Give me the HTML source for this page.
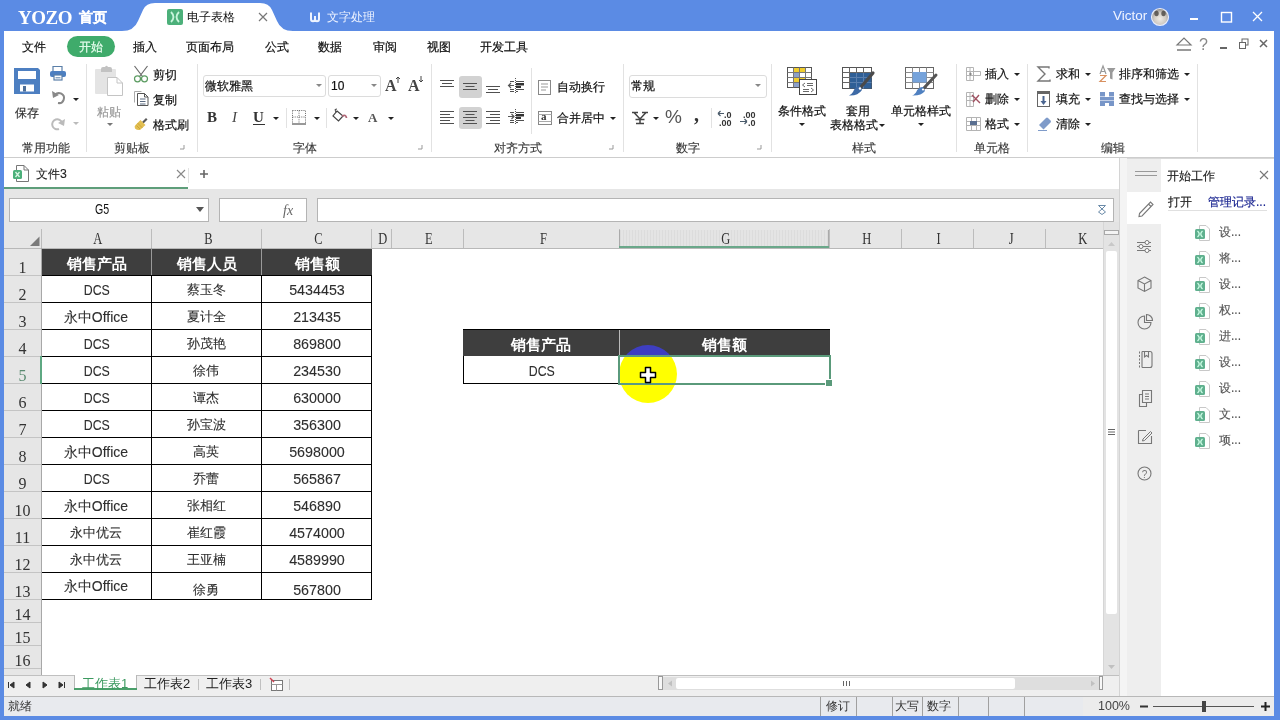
<!DOCTYPE html>
<html><head><meta charset="utf-8">
<style>
*{margin:0;padding:0;box-sizing:border-box}
html,body{width:1280px;height:720px;overflow:hidden}
body{background:#5b8be4;font-family:"Liberation Sans",sans-serif;color:#222;position:relative}
.a{position:absolute;white-space:nowrap}
.t12{font-size:12px;line-height:14px;color:#111;-webkit-text-stroke-width:0.2px}
.gl{color:#3a3a3a;font-size:12px;line-height:14px;-webkit-text-stroke-width:0.15px}
.sep{position:absolute;width:1px;background:#e2e2e2}
.dd{position:absolute;width:0;height:0;border-left:3px solid transparent;border-right:3px solid transparent;border-top:3px solid #222}
.sf{font-family:"Liberation Serif",serif}
</style></head><body>

<!-- ============ TITLE BAR ============ -->
<div class="a sf" style="left:18px;top:7px;font-size:19px;line-height:22px;font-weight:bold;color:#fff;letter-spacing:-0.5px">YOZO</div>
<div class="a" style="left:79px;top:10px;font-size:13.5px;line-height:16px;font-weight:bold;color:#fff;-webkit-text-stroke-width:0.3px">首页</div>
<svg class="a" style="left:0;top:0" width="400" height="32">
<path d="M122,31 Q134,31 138,21 L143,10 Q146,3 155,3 L260,3 Q269,3 272,10 L277,21 Q281,31 293,31 Z" fill="#fff"/>
<rect x="167" y="9" width="16" height="16" rx="2" fill="#4cb07a"/>
<path d="M171,12 Q176,17 171,22 M179,12 Q174,17 179,22" stroke="#c8f5dc" stroke-width="1.8" fill="none"/>
<path d="M259,13 L267,21 M267,13 L259,21" stroke="#777" stroke-width="1.2"/>
<path d="M311,12.5 V19 Q311,21.3 313,21.3 Q315,21.3 315,19 V16 M315,19 Q315,21.3 317,21.3 Q319,21.3 319,19 V12.5" stroke="#eef4ff" stroke-width="2" fill="none"/>
</svg>
<div class="a" style="left:187px;top:10px;font-size:12px;line-height:14px;color:#111">电子表格</div>
<div class="a" style="left:327px;top:10px;font-size:12px;line-height:14px;color:#eef3ff">文字处理</div>
<div class="a" style="left:1113px;top:8px;font-size:13.5px;line-height:16px;color:#f0f4ff">Victor</div>
<svg class="a" style="left:1140px;top:0" width="140" height="32">
<defs><radialGradient id="av" cx="50%" cy="60%" r="60%"><stop offset="0" stop-color="#f0ece6"/><stop offset="0.6" stop-color="#cfc9c2"/><stop offset="1" stop-color="#8a8680"/></radialGradient></defs><circle cx="20" cy="17" r="8.5" fill="url(#av)" stroke="#e8eeff" stroke-width="1.2"/>
<ellipse cx="16.5" cy="13.5" rx="2.2" ry="2.8" fill="#4a4642" opacity="0.8"/><ellipse cx="23.5" cy="13.5" rx="2.2" ry="2.8" fill="#4a4642" opacity="0.8"/>
<rect x="50" y="18" width="8" height="2" fill="#fff"/>
<rect x="81.5" y="12.5" width="10" height="9.5" fill="none" stroke="#fff" stroke-width="1.4"/>
<path d="M113,12 L122,21 M122,12 L113,21" stroke="#fff" stroke-width="1.3"/>
</svg>

<!-- ============ RIBBON ============ -->
<div class="a" style="left:4px;top:31px;width:1270px;height:127px;background:#fff;border-bottom:1px solid #cdcdcd"></div>
<!-- menu -->
<div class="a t12" style="left:22px;top:40px">文件</div>
<div class="a" style="left:67px;top:36px;width:48px;height:21px;border-radius:11px;background:#3fab6b"></div>
<div class="a t12" style="left:79px;top:40px;color:#e9fff0">开始</div>
<div class="a t12" style="left:133px;top:40px">插入</div>
<div class="a t12" style="left:186px;top:40px">页面布局</div>
<div class="a t12" style="left:265px;top:40px">公式</div>
<div class="a t12" style="left:318px;top:40px">数据</div>
<div class="a t12" style="left:373px;top:40px">审阅</div>
<div class="a t12" style="left:427px;top:40px">视图</div>
<div class="a t12" style="left:480px;top:40px">开发工具</div>
<svg class="a" style="left:1170px;top:34px" width="104" height="22">
<path d="M7,11 L14,4 L21,11 Z" fill="none" stroke="#777" stroke-width="1.2"/><path d="M7,16 H21" stroke="#777" stroke-width="1.5"/>
</svg>
<div class="a" style="left:1199px;top:36px;font-size:16px;line-height:18px;color:#888">?</div>
<svg class="a" style="left:1170px;top:34px" width="104" height="22">
<rect x="50" y="13" width="7" height="2" fill="#666"/>
<rect x="72" y="5" width="6" height="6" fill="none" stroke="#666"/><rect x="69.5" y="8.5" width="6" height="6" fill="#fff" stroke="#666"/>
<path d="M90,6 L97,13 M97,6 L90,13" stroke="#666" stroke-width="1.5"/>
</svg>

<!-- group separators -->
<div class="sep" style="left:86px;top:64px;height:88px"></div>
<div class="sep" style="left:197px;top:64px;height:88px"></div>
<div class="sep" style="left:431px;top:64px;height:88px"></div>
<div class="sep" style="left:531px;top:68px;height:66px"></div>
<div class="sep" style="left:623px;top:64px;height:88px"></div>
<div class="sep" style="left:771px;top:64px;height:88px"></div>
<div class="sep" style="left:956px;top:64px;height:88px"></div>
<div class="sep" style="left:1027px;top:64px;height:88px"></div>
<div class="sep" style="left:1197px;top:64px;height:88px"></div>

<!-- group labels -->
<div class="a gl" style="left:22px;top:141px">常用功能</div>
<div class="a gl" style="left:114px;top:141px">剪贴板</div>
<div class="a gl" style="left:293px;top:141px">字体</div>
<div class="a gl" style="left:494px;top:141px">对齐方式</div>
<div class="a gl" style="left:676px;top:141px">数字</div>
<div class="a gl" style="left:852px;top:141px">样式</div>
<div class="a gl" style="left:974px;top:141px">单元格</div>
<div class="a gl" style="left:1101px;top:141px">编辑</div>
<svg class="a" style="left:0;top:140px" width="1280" height="14">
<path d="M180,9 H184 V5 M418,9 H422 V5 M609,9 H613 V5 M757,9 H761 V5" stroke="#999" fill="none"/>
</svg>

<!-- common group -->
<svg class="a" style="left:10px;top:62px" width="76" height="72">
<path d="M4,6 H28 L30,8 V32 H4 Z" fill="#4d7fc1"/>
<rect x="8" y="9" width="18" height="8" fill="#fff"/>
<rect x="10" y="22.5" width="14" height="7" fill="#fff"/><rect x="13" y="24" width="3" height="5.5" fill="#4d6f99"/>
<path d="M43,4.5 H52 V10 H43 Z" fill="#fff" stroke="#5a7fa8" stroke-width="1.2"/>
<rect x="40" y="9" width="16" height="6" rx="2" fill="#4d7fc1"/>
<rect x="44" y="13" width="8" height="5" fill="#fff" stroke="#5a7fa8" stroke-width="1.2"/><path d="M45.5,15.8 H50.5" stroke="#5a7fa8"/>
<path d="M45,33 A5,5 0 1 1 48,41" fill="none" stroke="#888" stroke-width="2"/><path d="M42,29 L43,36 L49,33 Z" fill="#888"/>
<path d="M52,61 A5,5 0 1 0 49,67" fill="none" stroke="#bbb" stroke-width="2"/><path d="M55,57 L54,64 L48,61 Z" fill="#bbb"/>
</svg>
<div class="dd" style="left:73px;top:98px"></div>
<div class="dd" style="left:73px;top:122px;border-top-color:#bbb"></div>
<div class="a t12" style="left:15px;top:106px;color:#333">保存</div>

<!-- clipboard -->
<svg class="a" style="left:90px;top:62px" width="110" height="75">
<rect x="5" y="7" width="21" height="25" rx="1" fill="#e4e4e4"/>
<path d="M11,10 V7 Q11,5 13,5 H15 Q16.5,2.5 18,5 H20 Q22,5 22,7 V10 Z" fill="#c2c2c2"/>
<path d="M17.5,15.5 H27 L32.5,21 V33.5 H17.5 Z" fill="#fff" stroke="#c4c4c4"/><path d="M27,15.5 V21 H32.5" fill="none" stroke="#c4c4c4"/>
<path d="M44.5,4 L52.5,14.5 M57.5,4 L49.5,14.5" stroke="#6a6a6a" stroke-width="1.2"/>
<circle cx="47.5" cy="16.8" r="3" fill="#fff" stroke="#5c9c62" stroke-width="1.2"/><circle cx="54.5" cy="16.8" r="3" fill="#fff" stroke="#5c9c62" stroke-width="1.2"/>
<path d="M44.5,40.5 V29.5 H51.5" fill="none" stroke="#aaa"/>
<path d="M47.5,31.5 H54.5 L58,35 V43.5 H47.5 Z" fill="#fff" stroke="#555"/><path d="M54.5,31.5 V35 H58" fill="none" stroke="#555"/>
<path d="M50,37 H55.5 M50,39.5 H55.5 M50,42 H55.5" stroke="#5a6a80"/>
<path d="M52,60 L56,56 L57.5,57.5 L53.5,61.5 Z" fill="#5a5a5a"/>
<path d="M50.5,58 L55.5,63 L50,68 Q47,68.5 45,66.5 Q44,64 45.5,63 Z" fill="#e2bf52"/>
<path d="M47.5,61 L52.5,66 M46.5,63.5 L50,67" stroke="#c8a030" stroke-width="0.8"/>
</svg>
<div class="a t12" style="left:97px;top:105px;color:#999">粘贴</div>
<div class="dd" style="left:107px;top:123px;border-top-color:#777"></div>
<div class="a t12" style="left:153px;top:68px">剪切</div>
<div class="a t12" style="left:153px;top:93px">复制</div>
<div class="a t12" style="left:153px;top:118px">格式刷</div>

<!-- font group -->
<div class="a" style="left:203px;top:75px;width:123px;height:22px;border:1px solid #dcdcdc;border-radius:3px"></div>
<div class="a t12" style="left:205px;top:79px">微软雅黑</div>
<div class="dd" style="left:316px;top:84px;border-top-color:#888"></div>
<div class="a" style="left:328px;top:75px;width:53px;height:22px;border:1px solid #dcdcdc;border-radius:3px"></div>
<div class="a t12" style="left:331px;top:79px">10</div>
<div class="dd" style="left:371px;top:84px;border-top-color:#888"></div>
<div class="a sf" style="left:385px;top:77px;font-size:16px;line-height:18px;font-weight:bold;color:#444">A</div>
<div class="a sf" style="left:408px;top:77px;font-size:16px;line-height:18px;font-weight:bold;color:#444">A</div>
<svg class="a" style="left:395px;top:76px" width="40" height="14">
<path d="M3,7 V1 M1,3 L3,1 L5,3" stroke="#444" fill="none"/>
<path d="M26,0 V6 M24,4 L26,6 L28,4" stroke="#444" fill="none"/>
</svg>
<div class="a sf" style="left:207px;top:108px;font-size:15px;line-height:18px;font-weight:bold;color:#333">B</div>
<div class="a sf" style="left:232px;top:108px;font-size:15px;line-height:18px;font-style:italic;color:#444">I</div>
<div class="a sf" style="left:253px;top:108px;font-size:15px;line-height:18px;font-weight:bold;color:#333">U</div>
<div class="a" style="left:253px;top:124px;width:12px;height:1px;background:#333"></div>
<div class="dd" style="left:273px;top:117px"></div>
<div class="sep" style="left:286px;top:108px;height:20px"></div>
<svg class="a" style="left:290px;top:108px" width="20" height="20">
<path d="M2.5,2.5 H15.5 V15.5 M2.5,2.5 V15.5 M9,2.5 V15.5 M2.5,9 H15.5" stroke="#666" stroke-dasharray="1,1.2" fill="none"/>
<path d="M2,16 H16" stroke="#333"/>
</svg>
<div class="dd" style="left:314px;top:117px"></div>
<div class="sep" style="left:326px;top:108px;height:20px"></div>
<svg class="a" style="left:330px;top:108px" width="20" height="20">
<path d="M7,3 L13,8 L8.5,13 L3,8 Z" fill="#fff" stroke="#444" stroke-width="1.2"/><path d="M6,4.5 L5,1.5 L7,1" stroke="#444" fill="none"/>
<path d="M12,8 Q16,6 16.5,10" stroke="#b06878" stroke-width="1.8" fill="none"/>
</svg>
<div class="dd" style="left:353px;top:117px"></div>
<div class="a sf" style="left:368px;top:110px;font-size:13px;line-height:15px;font-weight:bold;color:#555">A</div>
<div class="dd" style="left:388px;top:117px"></div>

<!-- alignment group -->
<div class="a" style="left:459px;top:76px;width:23px;height:22px;border-radius:3px;background:#d2d2d2"></div>
<div class="a" style="left:459px;top:107px;width:23px;height:22px;border-radius:3px;background:#d2d2d2"></div>
<svg class="a" style="left:436px;top:74px" width="95" height="58">
<g stroke="#505050" stroke-width="1">
<path d="M4,6.5 H18 M6,9.5 H16 M4,12.5 H18"/>
<path d="M27,9.5 H41 M29.5,12.5 H38.5 M27,15.5 H41"/>
<path d="M50,12.5 H64 M52,15.5 H62 M50,18.5 H64"/>
<path d="M4,37.5 H18 M4,40.5 H14 M4,43.5 H18 M4,46.5 H14 M4,49.5 H18"/>
<path d="M27,37.5 H41 M29.5,40.5 H38.5 M27,43.5 H41 M29.5,46.5 H38.5 M27,49.5 H41"/>
<path d="M50,37.5 H64 M54,40.5 H64 M50,43.5 H64 M54,46.5 H64 M50,49.5 H64"/>
<path transform="translate(0,-2)" d="M74,9.5 H78 M80,9.5 H88 M80,17.5 H88 M74,17.5 H78 M74,19.5 H78 M80,19.5 H82"/>
<path transform="translate(0,-2)" d="M74,40.5 H78 M80,40.5 H88 M80,48.5 H88 M74,48.5 H78 M74,50.5 H78 M80,50.5 H82"/>
</g>
<g transform="translate(0,-2)"><path d="M80,11 H88 V13.5 H80 Z M80,14 H85 V16 H80 Z M80,42 H88 V44.5 H80 Z M80,45 H85 V47 H80 Z" fill="#333"/>
<path d="M79.5,6 V22 M79.5,37 V53" stroke="#555" stroke-dasharray="1,1"/>
<path d="M72.5,13.5 H78 M75,11 L72.5,13.5 L75,16" stroke="#555" fill="none" stroke-width="1.2"/>
<path d="M72,44.5 H78 M75.5,42 L78,44.5 L75.5,47" stroke="#555" fill="none" stroke-width="1.2"/></g>
</svg>
<svg class="a" style="left:535px;top:76px" width="20" height="52">
<rect x="3.5" y="4.5" width="12" height="14" fill="#fff" stroke="#888"/>
<path d="M6,8 H13 M6,11 H13 M6,14 H11" stroke="#999"/>
<rect x="3.5" y="35.5" width="13" height="13" fill="#fff" stroke="#888"/>
<path d="M3.5,38.5 H16.5 M3.5,45.5 H16.5" stroke="#aaa"/>
</svg>
<div class="a sf" style="left:541px;top:110px;font-size:11px;line-height:12px;color:#333;font-weight:bold">a</div>
<div class="a t12" style="left:557px;top:80px">自动换行</div>
<div class="a t12" style="left:557px;top:111px">合并居中</div>
<div class="dd" style="left:610px;top:117px"></div>

<!-- number group -->
<div class="a" style="left:629px;top:75px;width:138px;height:23px;border:1px solid #dcdcdc;border-radius:3px"></div>
<div class="a t12" style="left:631px;top:79px">常规</div>
<div class="dd" style="left:755px;top:84px;border-top-color:#888"></div>
<svg class="a" style="left:630px;top:108px" width="20" height="20"><path d="M2,4.5 H8 M12,4.5 H18 M4,4.5 L10,11 L16,4.5 M10,11 V15.5 M6,15.5 H14 M5.5,11.5 H14.5" stroke="#444" stroke-width="1.5" fill="none"/></svg>
<div class="dd" style="left:653px;top:117px"></div>
<div class="a" style="left:665px;top:106px;font-size:19px;line-height:22px;color:#555">%</div>
<div class="a sf" style="left:694px;top:104px;font-size:20px;line-height:20px;font-weight:bold;color:#333">,</div>
<div class="sep" style="left:711px;top:108px;height:20px"></div>
<svg class="a" style="left:714px;top:108px" width="46" height="20">
<path d="M4,5.5 H10 M4,5.5 L6.5,3 M4,5.5 L6.5,8" stroke="#4a5a6a" fill="none" stroke-width="1.2"/>
<path d="M26,13.5 H33 M33,13.5 L30.5,11 M33,13.5 L30.5,16" stroke="#4a5a6a" fill="none" stroke-width="1.2"/>
</svg>
<div class="a" style="left:724px;top:110px;font-size:9px;line-height:10px;color:#333;font-weight:bold">.0</div>
<div class="a" style="left:719px;top:118px;font-size:9px;line-height:10px;color:#333;font-weight:bold">.00</div>
<div class="a" style="left:743px;top:110px;font-size:9px;line-height:10px;color:#333;font-weight:bold">.00</div>
<div class="a" style="left:748px;top:118px;font-size:9px;line-height:10px;color:#333;font-weight:bold">.0</div>

<!-- styles group -->
<svg class="a" style="left:780px;top:62px" width="170" height="40">
<g>
<rect x="7.5" y="5.5" width="24" height="20" fill="#fff" stroke="#555"/>
<rect x="14" y="6" width="12" height="5" fill="#f0cd2e"/><rect x="14" y="11" width="5" height="4" fill="#8ca0c8"/><rect x="14" y="15" width="12" height="5" fill="#f0cd2e"/><rect x="14" y="20" width="6" height="5" fill="#8ca0c8"/>
<path d="M7.5,10.5 H31.5 M7.5,15.5 H31.5 M7.5,20.5 H31.5 M13.5,5.5 V25.5 M19.5,5.5 V25.5 M25.5,5.5 V25.5" stroke="#777" fill="none"/>
<rect x="19.5" y="17.5" width="17" height="15" fill="#fff" stroke="#444"/>
<path d="M25,21 L22.5,23 L25,25 M27,21.5 H33 M27,23.5 H33 M23,27.5 H29 M23,29.5 H29 M31,26 L33.5,28 L31,30" stroke="#444" fill="none" stroke-width="0.8"/>
</g>
<g transform="translate(62,0)">
<rect x="0.5" y="5.5" width="29" height="21" fill="#fff" stroke="#555"/>
<rect x="7.5" y="10.5" width="22" height="16" fill="#2f5f96"/>
<path d="M0.5,10.5 H29.5 M0.5,15.5 H29.5 M0.5,20.5 H29.5 M7.5,5.5 V26.5 M14.5,5.5 V26.5 M21.5,5.5 V26.5" stroke="#666" fill="none"/>
<path d="M8,15.5 H29.5 M8,20.5 H29.5 M14.5,11 V26.5 M21.5,11 V26.5" stroke="#5a7fae" fill="none"/>
<path d="M31,11 L19,25" stroke="#4a4a4a" stroke-width="3.2" stroke-linecap="round"/>
<path d="M18,24 Q13,24 11,30 Q9,33 7,33.5 Q16,34 20,28 Z" fill="#3d6aa6"/>
<circle cx="18" cy="26.5" r="1.2" fill="#fff"/>
</g>
<g transform="translate(125,0)">
<rect x="0.5" y="5.5" width="28" height="21" fill="#fff" stroke="#666"/>
<path d="M0.5,10.5 H28.5 M0.5,15.5 H28.5 M0.5,20.5 H28.5 M7.5,5.5 V26.5 M14.5,5.5 V26.5 M21.5,5.5 V26.5" stroke="#8a8a8a" fill="none"/>
<rect x="7.5" y="10" width="14" height="10.5" fill="#76a3db"/>
<path d="M31,13 L19,26" stroke="#555" stroke-width="3" stroke-linecap="round"/>
<path d="M18,25 Q13,25 11,30.5 Q9,33 7,33.5 Q16,34 20,29 Z" fill="#4f80c0"/>
<circle cx="18" cy="27.5" r="1.1" fill="#fff"/>
</g>
</svg>
<div class="a t12" style="left:778px;top:104px">条件格式</div>
<div class="dd" style="left:799px;top:123px"></div>
<div class="a t12" style="left:846px;top:104px">套用</div>
<div class="a t12" style="left:830px;top:118px">表格格式</div>
<div class="dd" style="left:879px;top:124px"></div>
<div class="a t12" style="left:891px;top:104px">单元格样式</div>
<div class="dd" style="left:918px;top:123px"></div>

<!-- cells group -->
<svg class="a" style="left:962px;top:62px" width="240" height="72">
<g stroke="#b4b4b4" fill="none">
<path d="M4.5,5.5 H11.5 V18.5 H4.5 Z M4.5,9.5 H11.5 M4.5,13.5 H11.5 M8,5.5 V18.5 M11.5,9.5 H18.5 V13.5 H11.5"/>
<path d="M4.5,30.5 H11.5 V44.5 H4.5 Z M4.5,34.5 H11.5 M4.5,38.5 H11.5 M8,30.5 V44.5"/>
<path d="M4.5,55.5 H18.5 V68.5 H4.5 Z M4.5,59.5 H18.5 M4.5,63.5 H18.5 M9.5,55.5 V68.5 M14.5,55.5 V68.5"/>
</g>
<path d="M7,12 H10 M8.5,10.5 V13.5" stroke="#888"/>
<path d="M10,33 L18,41 M17,33 L11,40" stroke="#a05060" stroke-width="1.4"/>
<rect x="8" y="59" width="7" height="4" fill="#5a6f90"/>
<path d="M87,6.5 V5 H76 L83,12 L76,19 H88 V17.5" stroke="#777" stroke-width="1.4" fill="none"/>
<rect x="75.5" y="29.5" width="12" height="15" fill="#fff" stroke="#666"/>
<rect x="75.5" y="29.5" width="12" height="2.5" fill="#666"/>
<path d="M81.5,34 V40" stroke="#4a6590" stroke-width="2"/><path d="M78.5,39 L81.5,43 L84.5,39 Z" fill="#4a6590"/>
<path d="M77,63 L84,56 Q85,55 86,56 L88.5,58.5 Q89.5,59.5 88.5,60.5 L81.5,67.5 Z" fill="#7f9bc9"/><path d="M76,68.5 H85" stroke="#7f9bc9"/>
<path d="M138,12 L141,4 L144,12 M139,9.5 H143" stroke="#999" fill="none" stroke-width="1.2"/>
<path d="M138,13.5 H144 L138,19.5 H144" stroke="#d89060" fill="none" stroke-width="1.2"/>
<path d="M145,6 H153.5 L150.5,10.5 V17.5 L148,16.5 V10.5 Z" fill="#9a9a9a"/>
<g fill="#7896c8"><rect x="138" y="30" width="5" height="14"/><rect x="147" y="30" width="5" height="14"/><rect x="143" y="35" width="4" height="6"/></g>
<path d="M138,34.5 H152 M138,38.5 H152" stroke="#fff" stroke-width="0.8" opacity="0.7"/>
</svg>
<div class="a t12" style="left:985px;top:67px">插入</div>
<div class="dd" style="left:1014px;top:73px"></div>
<div class="a t12" style="left:985px;top:92px">删除</div>
<div class="dd" style="left:1014px;top:98px"></div>
<div class="a t12" style="left:985px;top:117px">格式</div>
<div class="dd" style="left:1014px;top:123px"></div>
<div class="a t12" style="left:1056px;top:67px">求和</div>
<div class="dd" style="left:1085px;top:73px"></div>
<div class="a t12" style="left:1056px;top:92px">填充</div>
<div class="dd" style="left:1085px;top:98px"></div>
<div class="a t12" style="left:1056px;top:117px">清除</div>
<div class="dd" style="left:1085px;top:123px"></div>
<div class="a t12" style="left:1119px;top:67px">排序和筛选</div>
<div class="dd" style="left:1184px;top:73px"></div>
<div class="a t12" style="left:1119px;top:92px">查找与选择</div>
<div class="dd" style="left:1184px;top:98px"></div>

<div class="a" style="left:4px;top:158px;width:1115px;height:31px;background:#fff"></div>
<svg class="a" style="left:8px;top:162px" width="24" height="24"><path d="M8.5,3.5 H16 L20.5,8 V19.5 H8.5 Z" fill="#fff" stroke="#777"/><path d="M16,3.5 V8 H20.5" fill="none" stroke="#777"/><rect x="5" y="8" width="9" height="9" rx="1.5" fill="#4cb07a"/><path d="M7.5,10 L11.5,15 M11.5,10 L7.5,15" stroke="#d8f5e3" stroke-width="1.3"/></svg>
<div class="a" style="left:36px;top:167px;font-size:12.3px;line-height:15px;-webkit-text-stroke-width:0.1px;color:#222">文件3</div>
<svg class="a" style="left:170px;top:162px" width="50" height="24"><path d="M7,8 L15,16 M15,8 L7,16" stroke="#888" stroke-width="1.1"/><path d="M18.5,6 V21" stroke="#e2e2e2"/><path d="M30,12 H38 M34,8 V16" stroke="#666" stroke-width="1.6"/></svg>
<div class="a" style="left:4px;top:187px;width:184px;height:2px;background:#5e9e7a"></div>
<div class="a" style="left:4px;top:189px;width:1115px;height:59px;background:#e6e6e6"></div>
<div class="a" style="left:9px;top:198px;width:200px;height:24px;background:#fff;border:1px solid #b4b4b4"></div>
<div class="a" style="left:95px;top:202px;font-size:14px;line-height:15px;color:#111;transform:scaleX(0.76);transform-origin:0 0">G5</div>
<div class="dd" style="left:196px;top:207px;border-left-width:4.5px;border-right-width:4.5px;border-top:5px solid #555"></div>
<div class="a" style="left:219px;top:198px;width:88px;height:24px;background:#fff;border:1px solid #b4b4b4"></div>
<div class="a sf" style="left:283px;top:203px;font-size:14px;line-height:16px;font-style:italic;color:#666">fx</div>
<div class="a" style="left:317px;top:198px;width:797px;height:24px;background:#fff;border:1px solid #b4b4b4"></div>
<svg class="a" style="left:1095px;top:203px" width="14" height="14"><path d="M3.5,2.5 H10.5 L7,6 L10.5,9 L7,11.5 L3.5,9 L7,6 Z" stroke="#6a8aa8" fill="none" stroke-width="1"/></svg>
<div class="a sf" style="left:43px;top:230px;width:110px;text-align:center;font-size:16px;line-height:18px;color:#333"><span style="display:inline-block;transform:scaleX(0.78)">A</span></div>
<div class="a" style="left:151px;top:229px;width:1px;height:19px;background:#bcbcbc"></div>
<div class="a sf" style="left:153px;top:230px;width:110px;text-align:center;font-size:16px;line-height:18px;color:#333"><span style="display:inline-block;transform:scaleX(0.78)">B</span></div>
<div class="a" style="left:261px;top:229px;width:1px;height:19px;background:#bcbcbc"></div>
<div class="a sf" style="left:263px;top:230px;width:110px;text-align:center;font-size:16px;line-height:18px;color:#333"><span style="display:inline-block;transform:scaleX(0.78)">C</span></div>
<div class="a" style="left:371px;top:229px;width:1px;height:19px;background:#bcbcbc"></div>
<div class="a sf" style="left:373px;top:230px;width:20px;text-align:center;font-size:16px;line-height:18px;color:#333"><span style="display:inline-block;transform:scaleX(0.78)">D</span></div>
<div class="a" style="left:391px;top:229px;width:1px;height:19px;background:#bcbcbc"></div>
<div class="a sf" style="left:393px;top:230px;width:72px;text-align:center;font-size:16px;line-height:18px;color:#333"><span style="display:inline-block;transform:scaleX(0.78)">E</span></div>
<div class="a" style="left:463px;top:229px;width:1px;height:19px;background:#bcbcbc"></div>
<div class="a sf" style="left:465px;top:230px;width:156px;text-align:center;font-size:16px;line-height:18px;color:#333"><span style="display:inline-block;transform:scaleX(0.78)">F</span></div>
<div class="a" style="left:619px;top:229px;width:1px;height:19px;background:#bcbcbc"></div>
<div class="a sf" style="left:621px;top:230px;width:210px;text-align:center;font-size:16px;line-height:18px;color:#333"><span style="display:inline-block;transform:scaleX(0.78)">G</span></div>
<div class="a" style="left:829px;top:229px;width:1px;height:19px;background:#bcbcbc"></div>
<div class="a sf" style="left:831px;top:230px;width:72px;text-align:center;font-size:16px;line-height:18px;color:#333"><span style="display:inline-block;transform:scaleX(0.78)">H</span></div>
<div class="a" style="left:901px;top:229px;width:1px;height:19px;background:#bcbcbc"></div>
<div class="a sf" style="left:903px;top:230px;width:72px;text-align:center;font-size:16px;line-height:18px;color:#333"><span style="display:inline-block;transform:scaleX(0.78)">I</span></div>
<div class="a" style="left:973px;top:229px;width:1px;height:19px;background:#bcbcbc"></div>
<div class="a sf" style="left:975px;top:230px;width:72px;text-align:center;font-size:16px;line-height:18px;color:#333"><span style="display:inline-block;transform:scaleX(0.78)">J</span></div>
<div class="a" style="left:1045px;top:229px;width:1px;height:19px;background:#bcbcbc"></div>
<div class="a sf" style="left:1047px;top:230px;width:72px;text-align:center;font-size:16px;line-height:18px;color:#333"><span style="display:inline-block;transform:scaleX(0.78)">K</span></div>
<div class="a" style="left:4px;top:248px;width:1099px;height:1px;background:#b8b8b8"></div>
<svg class="a" style="left:26px;top:232px" width="14" height="14"><path d="M13.5,4.5 V14 H4 Z" fill="#7a7a7a"/></svg>
<div class="a" style="left:41px;top:229px;width:1px;height:19px;background:#bcbcbc"></div>
<div class="a" style="left:620px;top:230px;width:209px;height:18px;background:repeating-linear-gradient(90deg,#dcdcdc 0 1px,#e4e4e4 1px 3px)"></div>
<div class="a sf" style="left:621px;top:230px;width:210px;text-align:center;font-size:16px;line-height:18px;color:#333"><span style="display:inline-block;transform:scaleX(0.78)">G</span></div>
<div class="a" style="left:619px;top:230px;width:1px;height:18px;background:#aaa"></div><div class="a" style="left:828px;top:230px;width:1px;height:18px;background:#aaa"></div>
<div class="a" style="left:619px;top:246px;width:210px;height:2px;background:#6aa88a"></div>
<div class="a" style="left:41px;top:249px;width:1062px;height:426px;background:#fff"></div>
<div class="a" style="left:4px;top:249px;width:37px;height:426px;background:#e6e6e6"></div>
<div class="a" style="left:41px;top:248px;width:1px;height:427px;background:#d0d0d0"></div>
<div class="a" style="left:4px;top:275px;width:37px;height:1px;background:#c4c4c4"></div>
<div class="a sf" style="left:4px;top:259px;width:37px;text-align:center;font-size:16px;line-height:18px;color:#333">1</div>
<div class="a" style="left:4px;top:302px;width:37px;height:1px;background:#c4c4c4"></div>
<div class="a sf" style="left:4px;top:286px;width:37px;text-align:center;font-size:16px;line-height:18px;color:#333">2</div>
<div class="a" style="left:4px;top:329px;width:37px;height:1px;background:#c4c4c4"></div>
<div class="a sf" style="left:4px;top:313px;width:37px;text-align:center;font-size:16px;line-height:18px;color:#333">3</div>
<div class="a" style="left:4px;top:356px;width:37px;height:1px;background:#c4c4c4"></div>
<div class="a sf" style="left:4px;top:340px;width:37px;text-align:center;font-size:16px;line-height:18px;color:#333">4</div>
<div class="a" style="left:4px;top:383px;width:37px;height:1px;background:#c4c4c4"></div>
<div class="a sf" style="left:4px;top:367px;width:37px;text-align:center;font-size:16px;line-height:18px;color:#5a8a70">5</div>
<div class="a" style="left:4px;top:410px;width:37px;height:1px;background:#c4c4c4"></div>
<div class="a sf" style="left:4px;top:394px;width:37px;text-align:center;font-size:16px;line-height:18px;color:#333">6</div>
<div class="a" style="left:4px;top:437px;width:37px;height:1px;background:#c4c4c4"></div>
<div class="a sf" style="left:4px;top:421px;width:37px;text-align:center;font-size:16px;line-height:18px;color:#333">7</div>
<div class="a" style="left:4px;top:464px;width:37px;height:1px;background:#c4c4c4"></div>
<div class="a sf" style="left:4px;top:448px;width:37px;text-align:center;font-size:16px;line-height:18px;color:#333">8</div>
<div class="a" style="left:4px;top:491px;width:37px;height:1px;background:#c4c4c4"></div>
<div class="a sf" style="left:4px;top:475px;width:37px;text-align:center;font-size:16px;line-height:18px;color:#333">9</div>
<div class="a" style="left:4px;top:518px;width:37px;height:1px;background:#c4c4c4"></div>
<div class="a sf" style="left:4px;top:502px;width:37px;text-align:center;font-size:16px;line-height:18px;color:#333">10</div>
<div class="a" style="left:4px;top:545px;width:37px;height:1px;background:#c4c4c4"></div>
<div class="a sf" style="left:4px;top:529px;width:37px;text-align:center;font-size:16px;line-height:18px;color:#333">11</div>
<div class="a" style="left:4px;top:572px;width:37px;height:1px;background:#c4c4c4"></div>
<div class="a sf" style="left:4px;top:556px;width:37px;text-align:center;font-size:16px;line-height:18px;color:#333">12</div>
<div class="a" style="left:4px;top:599px;width:37px;height:1px;background:#c4c4c4"></div>
<div class="a sf" style="left:4px;top:583px;width:37px;text-align:center;font-size:16px;line-height:18px;color:#333">13</div>
<div class="a" style="left:4px;top:622px;width:37px;height:1px;background:#c4c4c4"></div>
<div class="a sf" style="left:4px;top:606px;width:37px;text-align:center;font-size:16px;line-height:18px;color:#333">14</div>
<div class="a" style="left:4px;top:645px;width:37px;height:1px;background:#c4c4c4"></div>
<div class="a sf" style="left:4px;top:629px;width:37px;text-align:center;font-size:16px;line-height:18px;color:#333">15</div>
<div class="a" style="left:4px;top:668px;width:37px;height:1px;background:#c4c4c4"></div>
<div class="a sf" style="left:4px;top:652px;width:37px;text-align:center;font-size:16px;line-height:18px;color:#333">16</div>
<div class="a" style="left:41px;top:249px;width:331px;height:26px;background:#3e3e3e"></div>
<div class="a" style="left:41px;top:275px;width:331px;height:1px;background:#000"></div>
<div class="a" style="left:41px;top:302px;width:331px;height:1px;background:#000"></div>
<div class="a" style="left:41px;top:329px;width:331px;height:1px;background:#000"></div>
<div class="a" style="left:41px;top:356px;width:331px;height:1px;background:#000"></div>
<div class="a" style="left:41px;top:383px;width:331px;height:1px;background:#000"></div>
<div class="a" style="left:41px;top:410px;width:331px;height:1px;background:#000"></div>
<div class="a" style="left:41px;top:437px;width:331px;height:1px;background:#000"></div>
<div class="a" style="left:41px;top:464px;width:331px;height:1px;background:#000"></div>
<div class="a" style="left:41px;top:491px;width:331px;height:1px;background:#000"></div>
<div class="a" style="left:41px;top:518px;width:331px;height:1px;background:#000"></div>
<div class="a" style="left:41px;top:545px;width:331px;height:1px;background:#000"></div>
<div class="a" style="left:41px;top:572px;width:331px;height:1px;background:#000"></div>
<div class="a" style="left:41px;top:599px;width:331px;height:1px;background:#000"></div>
<div class="a" style="left:151px;top:275px;width:1px;height:325px;background:#000"></div>
<div class="a" style="left:261px;top:275px;width:1px;height:325px;background:#000"></div>
<div class="a" style="left:371px;top:275px;width:1px;height:325px;background:#000"></div>
<div class="a" style="left:151px;top:248px;width:1px;height:27px;background:#9a9a9a"></div>
<div class="a" style="left:261px;top:248px;width:1px;height:27px;background:#9a9a9a"></div>
<div class="a" style="left:41px;top:248px;width:1px;height:427px;background:#a8a8a8"></div>
<div class="a" style="left:42px;top:256px;width:110px;text-align:center;font-size:14.5px;line-height:17px;font-weight:bold;color:#fff">销售产品</div>
<div class="a" style="left:152px;top:256px;width:110px;text-align:center;font-size:14.5px;line-height:17px;font-weight:bold;color:#fff">销售人员</div>
<div class="a" style="left:262px;top:256px;width:110px;text-align:center;font-size:14.5px;line-height:17px;font-weight:bold;color:#fff">销售额</div>
<div class="a" style="left:42px;top:282px;width:110px;text-align:center;font-size:14px;line-height:16px;color:#2e2e2e;-webkit-text-stroke-width:0.1px"><span style="display:inline-block;transform:scaleX(0.88)">DCS</span></div>
<div class="a" style="left:151px;top:282px;width:110px;text-align:center;font-size:13.3px;line-height:16px;color:#2e2e2e;-webkit-text-stroke-width:0.1px">蔡玉冬</div>
<div class="a" style="left:262px;top:282px;width:110px;text-align:center;font-size:14.3px;line-height:16px;color:#2e2e2e;-webkit-text-stroke-width:0.1px">5434453</div>
<div class="a" style="left:41px;top:309px;width:110px;text-align:center;font-size:14px;line-height:16px;color:#2e2e2e;-webkit-text-stroke-width:0.1px">永中Office</div>
<div class="a" style="left:151px;top:309px;width:110px;text-align:center;font-size:13.3px;line-height:16px;color:#2e2e2e;-webkit-text-stroke-width:0.1px">夏计全</div>
<div class="a" style="left:262px;top:309px;width:110px;text-align:center;font-size:14.3px;line-height:16px;color:#2e2e2e;-webkit-text-stroke-width:0.1px">213435</div>
<div class="a" style="left:42px;top:336px;width:110px;text-align:center;font-size:14px;line-height:16px;color:#2e2e2e;-webkit-text-stroke-width:0.1px"><span style="display:inline-block;transform:scaleX(0.88)">DCS</span></div>
<div class="a" style="left:151px;top:336px;width:110px;text-align:center;font-size:13.3px;line-height:16px;color:#2e2e2e;-webkit-text-stroke-width:0.1px">孙茂艳</div>
<div class="a" style="left:262px;top:336px;width:110px;text-align:center;font-size:14.3px;line-height:16px;color:#2e2e2e;-webkit-text-stroke-width:0.1px">869800</div>
<div class="a" style="left:42px;top:363px;width:110px;text-align:center;font-size:14px;line-height:16px;color:#2e2e2e;-webkit-text-stroke-width:0.1px"><span style="display:inline-block;transform:scaleX(0.88)">DCS</span></div>
<div class="a" style="left:151px;top:363px;width:110px;text-align:center;font-size:13.3px;line-height:16px;color:#2e2e2e;-webkit-text-stroke-width:0.1px">徐伟</div>
<div class="a" style="left:262px;top:363px;width:110px;text-align:center;font-size:14.3px;line-height:16px;color:#2e2e2e;-webkit-text-stroke-width:0.1px">234530</div>
<div class="a" style="left:42px;top:390px;width:110px;text-align:center;font-size:14px;line-height:16px;color:#2e2e2e;-webkit-text-stroke-width:0.1px"><span style="display:inline-block;transform:scaleX(0.88)">DCS</span></div>
<div class="a" style="left:151px;top:390px;width:110px;text-align:center;font-size:13.3px;line-height:16px;color:#2e2e2e;-webkit-text-stroke-width:0.1px">谭杰</div>
<div class="a" style="left:262px;top:390px;width:110px;text-align:center;font-size:14.3px;line-height:16px;color:#2e2e2e;-webkit-text-stroke-width:0.1px">630000</div>
<div class="a" style="left:42px;top:417px;width:110px;text-align:center;font-size:14px;line-height:16px;color:#2e2e2e;-webkit-text-stroke-width:0.1px"><span style="display:inline-block;transform:scaleX(0.88)">DCS</span></div>
<div class="a" style="left:151px;top:417px;width:110px;text-align:center;font-size:13.3px;line-height:16px;color:#2e2e2e;-webkit-text-stroke-width:0.1px">孙宝波</div>
<div class="a" style="left:262px;top:417px;width:110px;text-align:center;font-size:14.3px;line-height:16px;color:#2e2e2e;-webkit-text-stroke-width:0.1px">356300</div>
<div class="a" style="left:41px;top:444px;width:110px;text-align:center;font-size:14px;line-height:16px;color:#2e2e2e;-webkit-text-stroke-width:0.1px">永中Office</div>
<div class="a" style="left:151px;top:444px;width:110px;text-align:center;font-size:13.3px;line-height:16px;color:#2e2e2e;-webkit-text-stroke-width:0.1px">高英</div>
<div class="a" style="left:262px;top:444px;width:110px;text-align:center;font-size:14.3px;line-height:16px;color:#2e2e2e;-webkit-text-stroke-width:0.1px">5698000</div>
<div class="a" style="left:42px;top:471px;width:110px;text-align:center;font-size:14px;line-height:16px;color:#2e2e2e;-webkit-text-stroke-width:0.1px"><span style="display:inline-block;transform:scaleX(0.88)">DCS</span></div>
<div class="a" style="left:151px;top:471px;width:110px;text-align:center;font-size:13.3px;line-height:16px;color:#2e2e2e;-webkit-text-stroke-width:0.1px">乔蕾</div>
<div class="a" style="left:262px;top:471px;width:110px;text-align:center;font-size:14.3px;line-height:16px;color:#2e2e2e;-webkit-text-stroke-width:0.1px">565867</div>
<div class="a" style="left:41px;top:498px;width:110px;text-align:center;font-size:14px;line-height:16px;color:#2e2e2e;-webkit-text-stroke-width:0.1px">永中Office</div>
<div class="a" style="left:151px;top:498px;width:110px;text-align:center;font-size:13.3px;line-height:16px;color:#2e2e2e;-webkit-text-stroke-width:0.1px">张相红</div>
<div class="a" style="left:262px;top:498px;width:110px;text-align:center;font-size:14.3px;line-height:16px;color:#2e2e2e;-webkit-text-stroke-width:0.1px">546890</div>
<div class="a" style="left:41px;top:525px;width:110px;text-align:center;font-size:13.3px;line-height:16px;color:#2e2e2e;-webkit-text-stroke-width:0.1px">永中优云</div>
<div class="a" style="left:151px;top:525px;width:110px;text-align:center;font-size:13.3px;line-height:16px;color:#2e2e2e;-webkit-text-stroke-width:0.1px">崔红霞</div>
<div class="a" style="left:262px;top:525px;width:110px;text-align:center;font-size:14.3px;line-height:16px;color:#2e2e2e;-webkit-text-stroke-width:0.1px">4574000</div>
<div class="a" style="left:41px;top:552px;width:110px;text-align:center;font-size:13.3px;line-height:16px;color:#2e2e2e;-webkit-text-stroke-width:0.1px">永中优云</div>
<div class="a" style="left:151px;top:552px;width:110px;text-align:center;font-size:13.3px;line-height:16px;color:#2e2e2e;-webkit-text-stroke-width:0.1px">王亚楠</div>
<div class="a" style="left:262px;top:552px;width:110px;text-align:center;font-size:14.3px;line-height:16px;color:#2e2e2e;-webkit-text-stroke-width:0.1px">4589990</div>
<div class="a" style="left:41px;top:578px;width:110px;text-align:center;font-size:14px;line-height:16px;color:#2e2e2e;-webkit-text-stroke-width:0.1px">永中Office</div>
<div class="a" style="left:151px;top:582px;width:110px;text-align:center;font-size:13.3px;line-height:16px;color:#2e2e2e;-webkit-text-stroke-width:0.1px">徐勇</div>
<div class="a" style="left:262px;top:582px;width:110px;text-align:center;font-size:14.3px;line-height:16px;color:#2e2e2e;-webkit-text-stroke-width:0.1px">567800</div>
<div class="a" style="left:40px;top:356px;width:2px;height:28px;background:#5ea882"></div>
<div class="a" style="left:463px;top:329px;width:367px;height:27px;background:#3e3e3e"></div>
<div class="a" style="left:619px;top:329px;width:1px;height:27px;background:#bbb"></div>
<div class="a" style="left:463px;top:329px;width:367px;height:1px;background:#000"></div>
<div class="a" style="left:463px;top:356px;width:1px;height:27px;background:#000"></div>
<div class="a" style="left:463px;top:383px;width:157px;height:1px;background:#000"></div>
<div class="a" style="left:463px;top:337px;width:156px;text-align:center;font-size:14.5px;line-height:17px;font-weight:bold;color:#fff">销售产品</div>
<div class="a" style="left:619px;top:337px;width:210px;text-align:center;font-size:14.5px;line-height:17px;font-weight:bold;color:#fff">销售额</div>
<div class="a" style="left:464px;top:363px;width:156px;text-align:center;font-size:14px;line-height:16px;color:#2e2e2e;-webkit-text-stroke-width:0.1px"><span style="display:inline-block;transform:scaleX(0.88)">DCS</span></div>
<div class="a" style="left:618px;top:355px;width:213px;height:30px;border:2px solid #5a9a7a"></div>
<div class="a" style="left:825px;top:379px;width:8px;height:8px;background:#5a9a7a;border:1px solid #fff"></div>
<div class="a" style="left:619px;top:345px;width:58px;height:58px;border-radius:50%;background:#0000ff;mix-blend-mode:difference"></div>
<svg class="a" style="left:638px;top:365px" width="20" height="20"><path d="M7.5,2.5 H12.5 V7.5 H17.5 V12.5 H12.5 V17.5 H7.5 V12.5 H2.5 V7.5 H7.5 Z" fill="#fff" stroke="#000" stroke-width="1.5" stroke-linejoin="round"/></svg>
<div class="a" style="left:1103px;top:222px;width:16px;height:453px;background:#e3e3e3;border-left:1px solid #d6d6d6"></div>
<div class="a" style="left:1104px;top:230px;width:15px;height:5px;background:#f4f4f4;border:1px solid #a8a8a8"></div>
<svg class="a" style="left:1104px;top:238px" width="15" height="12"><path d="M4,8 L7.5,4 L11,8 Z" fill="#c8c8c8"/></svg>
<div class="a" style="left:1106px;top:251px;width:11px;height:363px;background:#fff;border-radius:2px"></div>
<svg class="a" style="left:1104px;top:662px" width="15" height="12"><path d="M4,3 L7.5,7 L11,3 Z" fill="#c0c0c0"/></svg>
<svg class="a" style="left:1104px;top:426px" width="15" height="12"><path d="M4,3.5 H11 M4,6 H11 M4,8.5 H11" stroke="#666"/></svg>
<div class="a" style="left:1119px;top:158px;width:8px;height:538px;background:#f4f4f4;border-left:1px solid #d4d4d4"></div>
<div class="a" style="left:4px;top:675px;width:1115px;height:21px;background:#efefef;border-top:1px solid #c0c0c0"></div>
<svg class="a" style="left:4px;top:676px" width="70" height="18"><path d="M4.5,4 V10 M10,4 L6,7 L10,10 Z M26,4 L22,7 L26,10 Z M39,4 L43,7 L39,10 Z M55,4 L59,7 L55,10 Z M60.5,4 V10" stroke="#333" fill="#333" stroke-width="1" transform="translate(0,2)"/></svg>
<div class="a" style="left:74px;top:675px;width:63px;height:15px;background:#fff;border-left:1px solid #b8b8b8;border-right:1px solid #b8b8b8"></div>
<div class="a" style="left:74px;top:688px;width:63px;height:2px;background:#4a9f6a"></div>
<div class="a" style="left:82px;top:676px;font-size:13px;line-height:15px;color:#3c9a60">工作表1</div>
<div class="a" style="left:144px;top:676px;font-size:13px;line-height:15px;color:#222">工作表2</div>
<div class="a" style="left:206px;top:676px;font-size:13px;line-height:15px;color:#222">工作表3</div>
<div class="a" style="left:198px;top:679px;width:1px;height:11px;background:#c0c0c0"></div>
<div class="a" style="left:260px;top:679px;width:1px;height:11px;background:#c0c0c0"></div>
<div class="a" style="left:289px;top:679px;width:1px;height:11px;background:#c0c0c0"></div>
<svg class="a" style="left:268px;top:677px" width="18" height="16"><rect x="3.5" y="3.5" width="11" height="10" fill="#fff" stroke="#777"/><path d="M3.5,7.5 H14.5 M8.5,7.5 V13.5" stroke="#999"/><path d="M2,1 L6,5" stroke="#d04050" stroke-width="1.5"/></svg>
<div class="a" style="left:658px;top:676px;width:5px;height:14px;background:#f8f8f8;border:1px solid #999"></div>
<div class="a" style="left:663px;top:677px;width:436px;height:13px;background:#dedede"></div>
<svg class="a" style="left:663px;top:677px" width="440" height="13"><path d="M5,6.5 L9,3.5 V9.5 Z M432,6.5 L428,3.5 V9.5 Z" fill="#c0c0c0"/></svg>
<div class="a" style="left:676px;top:678px;width:339px;height:11px;background:#fff;border-radius:2px"></div>
<svg class="a" style="left:840px;top:679px" width="14" height="9"><path d="M3.5,2 V7 M6.5,2 V7 M9.5,2 V7" stroke="#666"/></svg>
<div class="a" style="left:1099px;top:676px;width:4px;height:14px;background:#f8f8f8;border:1px solid #999"></div>
<div class="a" style="left:1127px;top:158px;width:147px;height:538px;background:#fff;border-top:1px solid #d8d8d8"></div>
<div class="a" style="left:1127px;top:159px;width:34px;height:537px;background:#eeeeee"></div>
<div class="a" style="left:1127px;top:192px;width:34px;height:32px;background:#fff"></div>
<svg class="a" style="left:1127px;top:159px" width="34" height="340"><path d="M8,12.5 H30 M8,16.5 H30" stroke="#999"/><path d="M12.5,54.5 L23.5,43 L26,45.5 L15,57 L12,57.5 Z M21.5,45 L24,47.5" fill="none" stroke="#777" stroke-width="1.1"/><path d="M10,83.5 H24 M10,87.5 H24 M10,91.5 H24" stroke="#777"/><circle cx="20" cy="83.5" r="2" fill="#fff" stroke="#777"/><circle cx="14" cy="87.5" r="2" fill="#fff" stroke="#777"/><circle cx="20" cy="91.5" r="2" fill="#fff" stroke="#777"/><path d="M17.5,118 L24,121.5 V129 L17.5,132.5 L11,129 V121.5 Z M11,121.5 L17.5,125 L24,121.5 M17.5,125 V132.5" fill="none" stroke="#777" stroke-width="1.1"/><path d="M17.5,157 A6.5,6.5 0 1 0 24,163.5 H17.5 Z" fill="none" stroke="#777" stroke-width="1.1"/><path d="M19.5,155.5 A6,6 0 0 1 25.5,161.5 H19.5 Z" fill="none" stroke="#777" stroke-width="1.1"/><path d="M12.5,192.5 V208.5" fill="none" stroke="#777" stroke-dasharray="2,1.5"/><path d="M15,192.5 H23 Q25,192.5 25,194.5 V206.5 Q25,208.5 23,208.5 H15 M15,192.5 V208.5 M17.5,192.5 V198 L19.5,196.5 L21.5,198 V192.5" fill="none" stroke="#777" stroke-width="1.1"/><path d="M15.5,235.5 H12.5 V247.5 H19.5 V243.5" fill="none" stroke="#777" stroke-width="1.1"/><path d="M15.5,231.5 H24.5 V243.5 H15.5 Z M18,235 H22 M18,237.5 H22 M18,240 H22" fill="none" stroke="#777" stroke-width="1.1"/><path d="M11.5,271.5 H19 M11.5,271.5 V284.5 H24.5 V277" fill="none" stroke="#777" stroke-width="1.1"/><path d="M16,280 L23.5,272.5 L25,274 L17.5,281.5 L15.5,282 Z" fill="none" stroke="#777"/><circle cx="17.5" cy="314.5" r="6.5" fill="none" stroke="#777" stroke-width="1.1"/><text x="17.5" y="318.5" font-size="10" text-anchor="middle" fill="#777" font-family="Liberation Sans">?</text></svg>
<div class="a" style="left:1167px;top:169px;font-size:12px;line-height:14px;-webkit-text-stroke-width:0.15px;color:#222">开始工作</div>
<svg class="a" style="left:1256px;top:167px" width="16" height="16"><path d="M4,4 L12,12 M12,4 L4,12" stroke="#777" stroke-width="1.1"/></svg>
<div class="a" style="left:1168px;top:195px;font-size:12px;line-height:14px;-webkit-text-stroke-width:0.15px;color:#222">打开</div>
<div class="a" style="left:1208px;top:195px;font-size:12px;line-height:14px;-webkit-text-stroke-width:0.15px;color:#1a2590">管理记录...</div>
<div class="a" style="left:1168px;top:210px;width:99px;height:1px;background:#e0e0e0"></div>
<svg class="a" style="left:1193px;top:224px" width="20" height="18"><path d="M6.5,1.5 H13 L16.5,5 V16.5 H6.5 Z" fill="#fff" stroke="#c8c8c8"/><rect x="2" y="5" width="10" height="10" rx="1.5" fill="#5fb08e"/><path d="M4.5,7 Q8,10 4.5,13 M9.5,7 Q6,10 9.5,13" stroke="#d0ffe8" stroke-width="1.3" fill="none"/></svg>
<div class="a" style="left:1219px;top:225px;font-size:12px;line-height:14px;-webkit-text-stroke-width:0.15px;color:#555">设...</div>
<svg class="a" style="left:1193px;top:250px" width="20" height="18"><path d="M6.5,1.5 H13 L16.5,5 V16.5 H6.5 Z" fill="#fff" stroke="#c8c8c8"/><rect x="2" y="5" width="10" height="10" rx="1.5" fill="#5fb08e"/><path d="M4.5,7 Q8,10 4.5,13 M9.5,7 Q6,10 9.5,13" stroke="#d0ffe8" stroke-width="1.3" fill="none"/></svg>
<div class="a" style="left:1219px;top:251px;font-size:12px;line-height:14px;-webkit-text-stroke-width:0.15px;color:#555">将...</div>
<svg class="a" style="left:1193px;top:276px" width="20" height="18"><path d="M6.5,1.5 H13 L16.5,5 V16.5 H6.5 Z" fill="#fff" stroke="#c8c8c8"/><rect x="2" y="5" width="10" height="10" rx="1.5" fill="#5fb08e"/><path d="M4.5,7 Q8,10 4.5,13 M9.5,7 Q6,10 9.5,13" stroke="#d0ffe8" stroke-width="1.3" fill="none"/></svg>
<div class="a" style="left:1219px;top:277px;font-size:12px;line-height:14px;-webkit-text-stroke-width:0.15px;color:#555">设...</div>
<svg class="a" style="left:1193px;top:302px" width="20" height="18"><path d="M6.5,1.5 H13 L16.5,5 V16.5 H6.5 Z" fill="#fff" stroke="#c8c8c8"/><rect x="2" y="5" width="10" height="10" rx="1.5" fill="#5fb08e"/><path d="M4.5,7 Q8,10 4.5,13 M9.5,7 Q6,10 9.5,13" stroke="#d0ffe8" stroke-width="1.3" fill="none"/></svg>
<div class="a" style="left:1219px;top:303px;font-size:12px;line-height:14px;-webkit-text-stroke-width:0.15px;color:#555">权...</div>
<svg class="a" style="left:1193px;top:328px" width="20" height="18"><path d="M6.5,1.5 H13 L16.5,5 V16.5 H6.5 Z" fill="#fff" stroke="#c8c8c8"/><rect x="2" y="5" width="10" height="10" rx="1.5" fill="#5fb08e"/><path d="M4.5,7 Q8,10 4.5,13 M9.5,7 Q6,10 9.5,13" stroke="#d0ffe8" stroke-width="1.3" fill="none"/></svg>
<div class="a" style="left:1219px;top:329px;font-size:12px;line-height:14px;-webkit-text-stroke-width:0.15px;color:#555">进...</div>
<svg class="a" style="left:1193px;top:354px" width="20" height="18"><path d="M6.5,1.5 H13 L16.5,5 V16.5 H6.5 Z" fill="#fff" stroke="#c8c8c8"/><rect x="2" y="5" width="10" height="10" rx="1.5" fill="#5fb08e"/><path d="M4.5,7 Q8,10 4.5,13 M9.5,7 Q6,10 9.5,13" stroke="#d0ffe8" stroke-width="1.3" fill="none"/></svg>
<div class="a" style="left:1219px;top:355px;font-size:12px;line-height:14px;-webkit-text-stroke-width:0.15px;color:#555">设...</div>
<svg class="a" style="left:1193px;top:380px" width="20" height="18"><path d="M6.5,1.5 H13 L16.5,5 V16.5 H6.5 Z" fill="#fff" stroke="#c8c8c8"/><rect x="2" y="5" width="10" height="10" rx="1.5" fill="#5fb08e"/><path d="M4.5,7 Q8,10 4.5,13 M9.5,7 Q6,10 9.5,13" stroke="#d0ffe8" stroke-width="1.3" fill="none"/></svg>
<div class="a" style="left:1219px;top:381px;font-size:12px;line-height:14px;-webkit-text-stroke-width:0.15px;color:#555">设...</div>
<svg class="a" style="left:1193px;top:406px" width="20" height="18"><path d="M6.5,1.5 H13 L16.5,5 V16.5 H6.5 Z" fill="#fff" stroke="#c8c8c8"/><rect x="2" y="5" width="10" height="10" rx="1.5" fill="#5fb08e"/><path d="M4.5,7 Q8,10 4.5,13 M9.5,7 Q6,10 9.5,13" stroke="#d0ffe8" stroke-width="1.3" fill="none"/></svg>
<div class="a" style="left:1219px;top:407px;font-size:12px;line-height:14px;-webkit-text-stroke-width:0.15px;color:#555">文...</div>
<svg class="a" style="left:1193px;top:432px" width="20" height="18"><path d="M6.5,1.5 H13 L16.5,5 V16.5 H6.5 Z" fill="#fff" stroke="#c8c8c8"/><rect x="2" y="5" width="10" height="10" rx="1.5" fill="#5fb08e"/><path d="M4.5,7 Q8,10 4.5,13 M9.5,7 Q6,10 9.5,13" stroke="#d0ffe8" stroke-width="1.3" fill="none"/></svg>
<div class="a" style="left:1219px;top:433px;font-size:12px;line-height:14px;-webkit-text-stroke-width:0.15px;color:#555">项...</div>
<div class="a" style="left:4px;top:696px;width:1270px;height:20px;background:#e8eaee;border-top:1px solid #b8b8b8"></div>
<div class="a" style="left:8px;top:699px;font-size:12px;line-height:14px;color:#333">就绪</div>
<div class="a" style="left:820px;top:697px;width:1px;height:19px;background:#a0a0a0"></div>
<div class="a" style="left:856px;top:697px;width:1px;height:19px;background:#a0a0a0"></div>
<div class="a" style="left:892px;top:697px;width:1px;height:19px;background:#a0a0a0"></div>
<div class="a" style="left:922px;top:697px;width:1px;height:19px;background:#a0a0a0"></div>
<div class="a" style="left:958px;top:697px;width:1px;height:19px;background:#a0a0a0"></div>
<div class="a" style="left:988px;top:697px;width:1px;height:19px;background:#a0a0a0"></div>
<div class="a" style="left:1024px;top:697px;width:1px;height:19px;background:#a0a0a0"></div>
<div class="a" style="left:1083px;top:697px;width:191px;height:19px;background:#ececec"></div>
<div class="a" style="left:826px;top:699px;font-size:12px;line-height:14px;color:#333">修订</div>
<div class="a" style="left:895px;top:699px;font-size:12px;line-height:14px;color:#333">大写</div>
<div class="a" style="left:927px;top:699px;font-size:12px;line-height:14px;color:#333">数字</div>
<div class="a" style="left:1098px;top:699px;font-size:12.5px;line-height:14px;color:#444">100%</div>
<svg class="a" style="left:1136px;top:697px" width="138" height="18"><path d="M4,9.5 H12" stroke="#333" stroke-width="2"/><path d="M17,9.5 H118" stroke="#555"/><rect x="66" y="4" width="4" height="11" fill="#444"/><path d="M125,9.5 H134 M129.5,5 V14" stroke="#222" stroke-width="2"/></svg>
</body></html>
